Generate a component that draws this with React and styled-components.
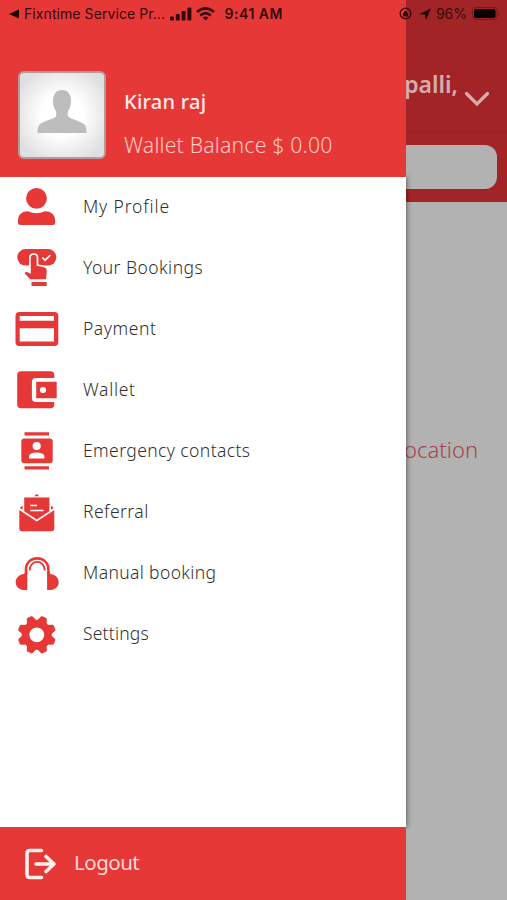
import React from "react";
import styled, { createGlobalStyle } from "styled-components";

const RED = "#e73838";

const Global = createGlobalStyle`
  * { box-sizing: border-box; }
  body { margin: 0; background: #b2b2b2; }
`;

const Screen = styled.div`
  position: relative;
  width: 507px;
  height: 900px;
  overflow: hidden;
  background: #b2b2b2;
  font-family: "Noto Sans", sans-serif;
`;

const Backdrop = styled.div`
  display: flex;
  flex-direction: column;
  height: 100%;
`;

const LocationBar = styled.div`
  display: flex;
  justify-content: flex-end;
  align-items: center;
  gap: 6px;
  height: 133px;
  padding: 38px 17px 0 0;
  background: #a32427;
  border-bottom: 1px solid #962024;
`;

const Place = styled.span`
  margin-top: -3px;
  color: #d6adae;
  font-size: 23px;
  font-weight: 600;
  line-height: 30px;
  letter-spacing: ${(p) => p.$spacing}px;
`;

const Chevron = styled.svg`
  width: 26px;
  height: 16px;
  margin-top: 27px;
`;

const SearchBar = styled.div`
  height: 69px;
  padding: 12px 10px 13px;
  background: #a32427;
`;

const SearchField = styled.div`
  height: 44px;
  border-radius: 12px;
  background: #b2b2b2;
`;

const Message = styled.div`
  padding: 232px 29px 0 0;
  color: #a94250;
  font-size: 22px;
  font-weight: 300;
  line-height: 30px;
  letter-spacing: ${(p) => p.$spacing}px;
  text-align: right;
`;

const Drawer = styled.aside`
  position: absolute;
  inset: 0 auto 0 0;
  display: flex;
  flex-direction: column;
  width: 406px;
  background: #fff;
`;

const Profile = styled.header`
  position: relative;
  display: flex;
  gap: 18px;
  height: 177px;
  padding: 71px 0 0 18px;
  background: ${RED};
`;

const Avatar = styled.div`
  width: 88px;
  height: 88px;
  border: 2px solid #b59a9c;
  border-radius: 6px;
  background: radial-gradient(circle, #fff 35%, #dedfe0 85%);
  overflow: hidden;
`;

const AvatarArt = styled.svg`
  display: block;
  width: 84px;
  height: 84px;
`;

const Identity = styled.div`
  display: flex;
  flex-direction: column;
  gap: 13px;
  padding-top: 16px;
`;

const Name = styled.div`
  color: #ffeceb;
  font-size: 20px;
  font-weight: 500;
  line-height: 30px;
  letter-spacing: ${(p) => p.$spacing}px;
`;

const Balance = styled(Name)`
  color: #ffc9c5;
  font-size: 21.2px;
  font-weight: 300;
`;

const Menu = styled.nav`
  flex: 1;
  box-shadow: 1px 0 5px rgba(0, 0, 0, 0.45);
`;

const Item = styled.div`
  display: flex;
  align-items: center;
  gap: 22px;
  height: 61.1px;
  padding: 0 0 1px 13px;
`;

const Icon = styled.svg`
  width: 48px;
  height: 48px;
  flex: none;
  fill: ${RED};
`;

const Label = styled.span`
  margin-top: -3px;
  color: #303030;
  font-size: 17.5px;
  font-weight: 300;
  line-height: 24px;
  white-space: nowrap;
  letter-spacing: ${(p) => p.$spacing}px;
`;

const Logout = styled.footer`
  position: relative;
  display: flex;
  align-items: center;
  gap: 17px;
  height: 73px;
  padding-left: 24px;
  background: ${RED};
  color: #ffd9d6;
`;

const LogoutIcon = styled.svg`
  width: 33px;
  height: 34px;
`;

const LogoutText = styled.span`
  margin-top: -3px;
  font-size: 20.5px;
  font-weight: 400;
  letter-spacing: ${(p) => p.$spacing}px;
`;

const StatusBar = styled.div`
  position: absolute;
  inset: 0 0 auto 0;
  display: flex;
  align-items: center;
  height: 27px;
  padding: 0 6px 0 9px;
  color: #330b0d;
  font-family: Inter, sans-serif;
`;

const StatusText = styled.span`
  font-size: 14px;
  font-weight: ${(p) => p.$weight || 400};
  letter-spacing: ${(p) => p.$spacing || 0}px;
  margin-left: ${(p) => p.$left || 0}px;
  white-space: nowrap;
`;

const Glyph = styled.svg`
  width: ${(p) => p.$w}px;
  height: ${(p) => p.$h}px;
  margin-left: ${(p) => p.$left || 0}px;
  flex: none;
`;

const Spacer = styled.div`
  flex: 1;
`;

const ProfileIcon = () => (
  <Icon viewBox="0 0 48 48">
    <circle cx="23.5" cy="15.4" r="10.4" />
    <path d="M5 38C5 31.5 9 28.2 15 28.2Q23.5 32.5 32 28.2C38 28.2 42.2 31.5 42.2 38V39.5Q42.2 42 39.5 42H7.6Q5 42 5 39.5Z" />
  </Icon>
);

const BookingsIcon = () => (
  <Icon viewBox="0 0 48 48">
    <rect x="4.3" y="5" width="39" height="16.6" rx="8.3" />
    <path
      d="M16.5 36C15 33.5 12 31.8 10.8 29.2Q11.8 25.6 16.9 28.4V13.8C16.9 8.7 24.5 8.7 24.5 13.8V21L31.4 22.5Q34.7 23.3 34.6 27L33.8 36Z"
      stroke="#fff"
      strokeWidth="1.7"
    />
    <path d="M18.5 38H33.7V42H18.5Z" />
    <path d="M29.3 13.5L32 16.2L37.5 11" fill="none" stroke="#fff" strokeWidth="1.7" />
  </Icon>
);

const PaymentIcon = () => (
  <Icon viewBox="0 0 48 48">
    <path
      fillRule="evenodd"
      d="M6.2 6.9H41.5Q45.3 6.9 45.3 10.7V37.3Q45.3 41 41.5 41H6.2Q2.5 41 2.5 37.3V10.7Q2.5 6.9 6.2 6.9ZM6.7 11V15.8H41V11ZM6.7 23.3V36.6H41V23.3Z"
    />
  </Icon>
);

const WalletIcon = () => (
  <Icon viewBox="0 0 48 48">
    <path d="M8 5.2H37.5Q41.3 5.2 41.3 9V12H22.8Q18.9 12 18.9 16V32Q18.9 36 22.8 36H41.3V38.5Q41.3 42.3 37.5 42.3H8Q4.2 42.3 4.2 38.5V9Q4.2 5.2 8 5.2Z" />
    <path
      fillRule="evenodd"
      d="M23.2 15.8H43.7V32.2H23.2ZM30 20.9A3.1 3.1 0 1 0 30 27.1A3.1 3.1 0 1 0 30 20.9Z"
    />
  </Icon>
);

const ContactsIcon = () => (
  <Icon viewBox="0 0 48 48">
    <path d="M11.5 5.3H36V8.5H11.5ZM11.5 39.3H36V42.5H11.5Z" />
    <rect x="8.3" y="11.5" width="31.4" height="24.7" rx="3" />
    <g fill="#fff">
      <circle cx="23.7" cy="19" r="4.1" />
      <path d="M16 31.5V29.4C16 24.3 31.4 24.3 31.4 29.4V31.5Z" />
    </g>
  </Icon>
);

const ReferralIcon = () => (
  <Icon viewBox="0 0 48 48">
    <path d="M21.3 7.2Q23.8 3.4 26.2 7.2ZM11.2 8.6H36.4V22.2L23.8 30.5L11.2 22.2Z" />
    <path d="M9.6 16.5V20.8L6.8 19ZM38 16.5V20.8L40.8 19Z" />
    <path d="M6.3 21L23.8 32.6L41.3 21V39.5Q41.3 42.3 38.5 42.3H9.2Q6.3 42.3 6.3 39.5Z" />
    <path d="M17.2 16.5H24M17.2 21.5H30.5" stroke="#fff" strokeWidth="1.4" />
  </Icon>
);

const HeadphonesIcon = () => (
  <Icon viewBox="0 0 48 48">
    <path
      d="M13 25V19.5C13 4.6 35.4 4.6 35.4 19.5V25"
      fill="none"
      stroke={RED}
      strokeWidth="2.6"
    />
    <path d="M16.6 20.5C16.6 9 31.8 9 31.8 20.5" fill="none" stroke={RED} strokeWidth="1.8" />
    <path d="M11.7 22H14.3V40H10.5C-0.1 39 -0.1 25 11.7 23.8ZM36.7 22H34.1V40H37.9C48.5 39 48.5 25 36.7 23.8Z" />
  </Icon>
);

const SettingsIcon = () => (
  <Icon viewBox="0 0 48 48">
    <circle cx="23.8" cy="23.8" r="11.2" fill="none" stroke={RED} strokeWidth="7.6" />
    {[22.5, 67.5, 112.5, 157.5, 202.5, 247.5, 292.5, 337.5].map((a) => (
      <path
        key={a}
        d="M18.4 11.5L20.3 6Q20.7 4.6 22 4.6H25.6Q26.9 4.6 27.3 6L29.2 11.5Z"
        transform={`rotate(${a} 23.8 23.8)`}
      />
    ))}
  </Icon>
);

const items = [
  { label: "My Profile", spacing: 0.85, Art: ProfileIcon },
  { label: "Your Bookings", spacing: 0.45, Art: BookingsIcon },
  { label: "Payment", spacing: 0.55, Art: PaymentIcon },
  { label: "Wallet", spacing: 0.7, Art: WalletIcon },
  { label: "Emergency contacts", spacing: 0.4, Art: ContactsIcon },
  { label: "Referral", spacing: 0.45, Art: ReferralIcon },
  { label: "Manual booking", spacing: 0.37, Art: HeadphonesIcon },
  { label: "Settings", spacing: 0.2, Art: SettingsIcon },
];

export default function App() {
  return (
    <Screen>
      <Global />
      <Backdrop>
        <LocationBar>
          <Place $spacing={0}>palli,</Place>
          <Chevron viewBox="0 0 26 16">
            <path d="M2.5 2.5L13 13L23.5 2.5" fill="none" stroke="#d6adae" strokeWidth="3.2" strokeLinecap="round" />
          </Chevron>
        </LocationBar>
        <SearchBar>
          <SearchField />
        </SearchBar>
        <Message $spacing={0}>ocation</Message>
      </Backdrop>

      <Drawer>
        <Profile>
          <Avatar>
            <AvatarArt viewBox="0 0 84 84">
              <path
                fill="#bdbdbd"
                d="M42 17C48 17 51 21.5 51 28C51 33 49.5 36 47.8 38.5V43C49 46 63 48 65.5 53Q66.5 55 66.5 60H17.5Q17.5 55 18.5 53C21 48 35 46 36.2 43V38.5C34.5 36 33 33 33 28C33 21.5 36 17 42 17Z"
              />
            </AvatarArt>
          </Avatar>
          <Identity>
            <Name $spacing={0.25}>Kiran raj</Name>
            <Balance $spacing={0.2}>Wallet Balance $ 0.00</Balance>
          </Identity>
        </Profile>
        <Menu>
          {items.map(({ label, spacing, Art }) => (
            <Item key={label}>
              <Art />
              <Label $spacing={spacing}>{label}</Label>
            </Item>
          ))}
        </Menu>
        <Logout>
          <LogoutIcon viewBox="0 0 33 34">
            <path
              d="M17.5 3.5H6Q3 3.5 3 6.5V27.5Q3 30.5 6 30.5H17.5M12 17H30M22 9.5L30 17L22 24.5"
              fill="none"
              stroke="#fff0ee"
              strokeWidth="3.6"
              strokeLinecap="round"
              strokeLinejoin="round"
            />
          </LogoutIcon>
          <LogoutText $spacing={-0.5}>Logout</LogoutText>
        </Logout>
      </Drawer>

      <StatusBar>
        <Glyph $w={10} $h={10} viewBox="0 0 10 10">
          <path d="M0 5L10 0.5V9.5Z" fill="#1d0506" />
        </Glyph>
        <StatusText $left={5} $spacing={0.08}>
          Fixntime Service Pr...
        </StatusText>
        <Glyph $w={22} $h={14} $left={5} viewBox="0 0 22 14">
          <g fill="#330b0d">
            <rect x="0" y="9.5" width="4" height="4" rx="1" />
            <rect x="5.8" y="7" width="4" height="6.5" rx="1" />
            <rect x="11.6" y="4" width="4" height="9.5" rx="1" />
            <rect x="17.4" y="0.5" width="4" height="13" rx="1" />
          </g>
        </Glyph>
        <Glyph $w={19} $h={14} $left={4} viewBox="0 0 19 14">
          <g fill="none" stroke="#330b0d" strokeWidth="2.5">
            <path d="M1 5Q9.5 -2.2 18 5" />
            <path d="M4.2 8.4Q9.5 4.2 14.8 8.4" />
          </g>
          <path d="M6.6 10.6Q9.5 8.4 12.4 10.6L9.5 13.6Z" fill="#330b0d" />
        </Glyph>
        <StatusText $left={9.5} $weight={600} $spacing={0.5}>
          9:41 AM
        </StatusText>
        <Spacer />
        <Glyph $w={13} $h={13} viewBox="0 0 13 13">
          <circle cx="6.5" cy="6.5" r="5.3" fill="none" stroke="#330b0d" strokeWidth="1.4" />
          <path d="M4 6H9V9.5H4ZM5 6V4.8Q6.5 2.5 8 4.8V6" fill="#330b0d" />
        </Glyph>
        <Glyph $w={12} $h={12} $left={7} viewBox="0 0 12 12">
          <path d="M0 6.2L12 0.5L7 12L6 6.5Z" fill="#1d0506" />
        </Glyph>
        <StatusText $left={5}>96%</StatusText>
        <Glyph $w={29} $h={13} $left={5} viewBox="0 0 29 13">
          <rect x="0.5" y="0.5" width="24.5" height="12" rx="3" fill="none" stroke="#701a1d" />
          <rect x="2" y="2" width="21.5" height="9" rx="1.8" fill="#080101" />
          <path d="M26.5 4.2Q28.5 6.5 26.5 8.8Z" fill="#701a1d" />
        </Glyph>
      </StatusBar>
    </Screen>
  );
}
